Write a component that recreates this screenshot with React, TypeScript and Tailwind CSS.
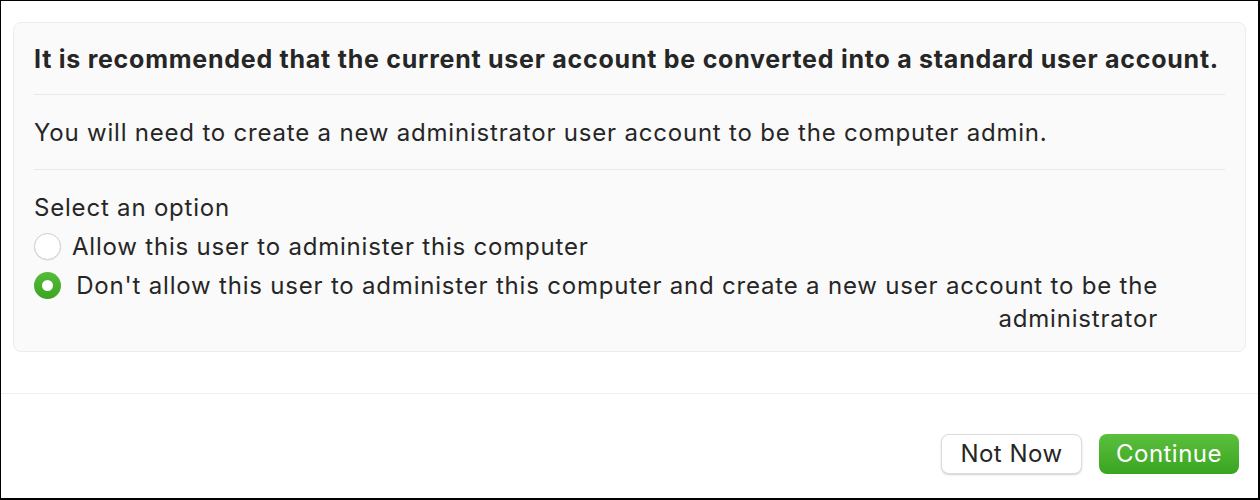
import React, { useState } from "react";

const font = { fontFamily: "Inter, 'Noto Sans', sans-serif" };

export default function App() {
  const [choice, setChoice] = useState<"allow" | "deny">("deny");

  return (
    <div
      className="w-[1260px] h-[500px] bg-white border-t border-l border-r-2 border-b-2 border-black flex flex-col text-[#262626] tracking-[0.05em]"
      style={font}
    >
      <div className="px-3 pt-[21px]">
        <div className="rounded-lg border border-[#ececec] bg-[#fafafa] px-5 pt-[20px] pb-[16px]">
          <h1 className="text-[25px] font-bold tracking-[0.03em] leading-[33px] pb-[18px] border-b border-[#e9e9e9]">
            It is recommended that the current user account be converted into a standard user account.
          </h1>
          <p className="text-[24px] leading-[33px] pt-[21px] pb-[20px] border-b border-[#e9e9e9]">
            You will need to create a new administrator user account to be the computer admin.
          </p>
          <div className="pt-[21px] text-[24px] leading-[33px] flex flex-col gap-[6px]">
            <div>Select an option</div>
            <label className="flex items-start gap-[11px] cursor-pointer" onClick={() => setChoice("allow")}>
              <Radio checked={choice === "allow"} />
              <span>Allow this user to administer this computer</span>
            </label>
            <label className="flex items-start gap-[7px] cursor-pointer" onClick={() => setChoice("deny")}>
              <Radio checked={choice === "deny"} />
              <span className="w-[1090px] text-right">
                Don't allow this user to administer this computer and create a new user account to be the administrator
              </span>
            </label>
          </div>
        </div>
      </div>

      <div className="mt-[41px] border-t border-[#eeeeee] flex-1 flex justify-end items-start gap-[17px] pt-[40px] pr-[19px] tracking-[0.03em]">
        <button className="w-[141px] h-[40px] rounded-lg bg-white border border-[#dcdcdc] shadow-[0_1px_2px_rgba(0,0,0,0.18)] text-[24px] leading-none text-[#262626]">
          Not Now
        </button>
        <button className="w-[140px] h-[40px] rounded-lg bg-gradient-to-b from-[#5cbf3e] to-[#38a51f] text-white text-[24px] leading-none">
          Continue
        </button>
      </div>
    </div>
  );
}

function Radio({ checked }: { checked: boolean }) {
  if (checked) {
    return (
      <span className="mt-[3px] w-[27px] h-[27px] shrink-0 rounded-full bg-gradient-to-b from-[#56bb38] to-[#3aa521] flex items-center justify-center">
        <span className="w-[11px] h-[11px] rounded-full bg-white" />
      </span>
    );
  }
  return (
    <span className="mt-[3px] w-[27px] h-[27px] shrink-0 rounded-full bg-white border border-[#cfcfcf] shadow-[0_0.5px_1px_rgba(0,0,0,0.1)]" />
  );
}
